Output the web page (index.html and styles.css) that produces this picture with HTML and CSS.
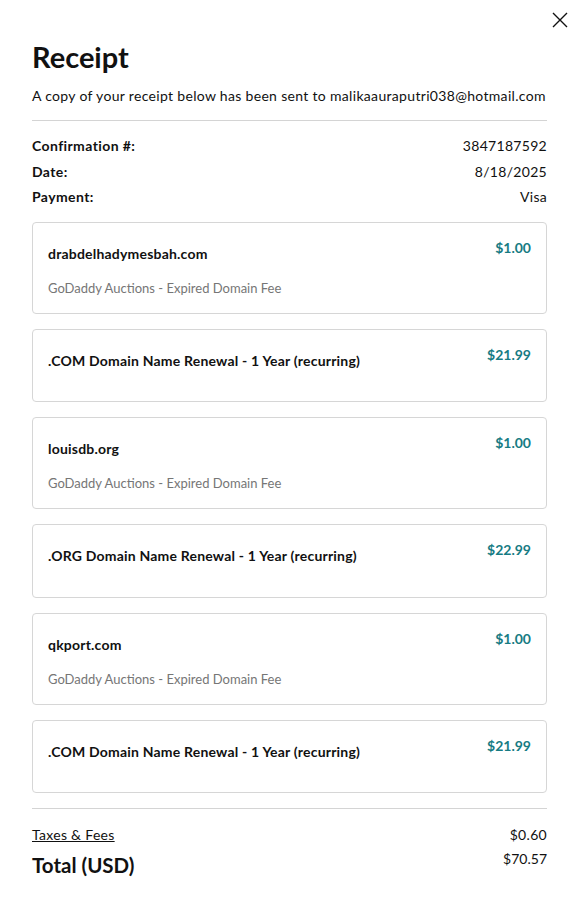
FILE: index.html
```html
<!DOCTYPE html>
<html>
<head>
<meta charset="utf-8">
<link rel="stylesheet" href="styles.css">
</head>
<body>
<div class="modal">
  <button class="close" aria-label="Close">
    <svg width="16" height="16" viewBox="0 0 16 16"><path d="M1 1L15 15M15 1L1 15" stroke="#111" stroke-width="1.4" fill="none"/></svg>
  </button>
  <h1 class="title">Receipt</h1>
  <p class="sub">A copy of your receipt below has been sent to malikaauraputri038@hotmail.com</p>
  <hr class="divider">
  <div class="info">
    <div class="info-row"><span class="label">Confirmation #:</span><span>3847187592</span></div>
    <div class="info-row"><span class="label">Date:</span><span>8/18/2025</span></div>
    <div class="info-row"><span class="label">Payment:</span><span>Visa</span></div>
  </div>
  <div class="items">
    <div class="card">
      <div class="card-top"><div class="name">drabdelhadymesbah.com</div><div class="price">$1.00</div></div>
      <div class="desc">GoDaddy Auctions - Expired Domain Fee</div>
    </div>
    <div class="card">
      <div class="card-top"><div class="name">.COM Domain Name Renewal - 1 Year (recurring)</div><div class="price">$21.99</div></div>
      <div class="spacer"></div>
    </div>
    <div class="card">
      <div class="card-top"><div class="name">louisdb.org</div><div class="price">$1.00</div></div>
      <div class="desc">GoDaddy Auctions - Expired Domain Fee</div>
    </div>
    <div class="card">
      <div class="card-top"><div class="name">.ORG Domain Name Renewal - 1 Year (recurring)</div><div class="price">$22.99</div></div>
      <div class="spacer"></div>
    </div>
    <div class="card">
      <div class="card-top"><div class="name">qkport.com</div><div class="price">$1.00</div></div>
      <div class="desc">GoDaddy Auctions - Expired Domain Fee</div>
    </div>
    <div class="card">
      <div class="card-top"><div class="name">.COM Domain Name Renewal - 1 Year (recurring)</div><div class="price">$21.99</div></div>
      <div class="spacer"></div>
    </div>
  </div>
  <hr class="divider divider-bottom">
  <div class="totals">
    <div class="tax-row"><a class="tax-link" href="#">Taxes &amp; Fees</a><span>$0.60</span></div>
    <div class="total-row"><span class="total-label">Total (USD)</span><span class="total-value">$70.57</span></div>
  </div>
</div>
</body>
</html>
```

FILE: styles.css
```css
* { box-sizing: border-box; }
html, body { margin: 0; padding: 0; background: #fff; }
body {
  font-family: Lato, "Noto Sans", "Liberation Sans", sans-serif;
  color: #111;
  font-size: 14px;
  line-height: 20px;
  letter-spacing: 0.3px;
}
.modal {
  position: relative;
  padding: 39px 30px 40px 32px;
}
.close {
  position: absolute;
  top: 12px;
  right: 9px;
  width: 16px;
  height: 16px;
  padding: 0;
  border: 0;
  background: none;
  display: flex;
}
.title {
  margin: 0;
  font-size: 29px;
  line-height: 36px;
  font-weight: 700;
  letter-spacing: 0;
}
.sub {
  margin: 11px 0 0;
  font-size: 14px;
  line-height: 20px;
  letter-spacing: 0.32px;
  white-space: nowrap;
}
.divider {
  margin: 14px 0 0;
  border: 0;
  border-top: 1px solid #d4d4d4;
  height: 0;
}
.info {
  margin-top: 12px;
  display: flex;
  flex-direction: column;
}
.info-row {
  display: flex;
  justify-content: space-between;
  line-height: 25.5px;
  font-size: 14px;
}
.label { font-weight: 700; letter-spacing: 0.4px; }
.items {
  margin-top: 12px;
  display: flex;
  flex-direction: column;
  gap: 15px;
}
.card {
  border: 1px solid #d6d6d6;
  border-radius: 4px;
  padding: 15px 15px 15.3px 15px;
}
.card-top {
  display: flex;
  justify-content: space-between;
  align-items: flex-start;
}
.name {
  margin-top: 6px;
  font-weight: 700;
  letter-spacing: 0.2px;
}
.price {
  color: #177b83;
  font-weight: 700;
  letter-spacing: 0;
}
.desc {
  margin-top: 14px;
  color: #767676;
  font-size: 13px;
  letter-spacing: 0;
}
.spacer { height: 15px; }
.divider-bottom { margin-top: 15px; }
.totals {
  margin-top: 16px;
  display: flex;
  flex-direction: column;
  gap: 6px;
}
.tax-row, .total-row {
  display: flex;
  justify-content: space-between;
  align-items: flex-start;
}
.tax-link {
  color: #111;
  text-decoration: underline;
}
.total-label {
  font-size: 20.5px;
  line-height: 28px;
  font-weight: 700;
  letter-spacing: 0;
}
.total-value { line-height: 16px; letter-spacing: 0; }
```
